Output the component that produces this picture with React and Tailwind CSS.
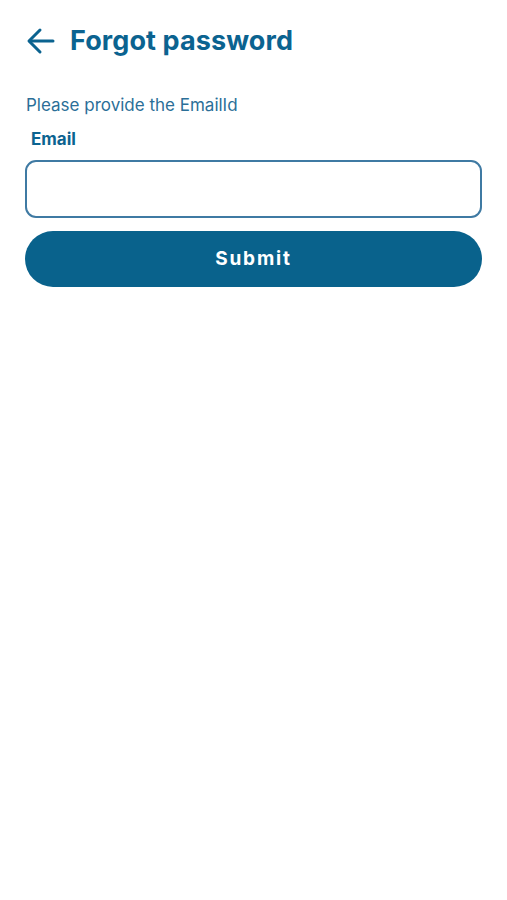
export default function App() {
  return (
    <div className="min-h-[900px] bg-white px-[25px] font-['Inter','Liberation_Sans',sans-serif] text-[#0b6390]">
      <div className="flex items-center gap-[14px] pt-[26px]">
        <svg width="30" height="30" viewBox="0 0 30 30" fill="none" stroke="#0b6390" strokeWidth="3" strokeLinecap="round" strokeLinejoin="round" className="ml-[1px]">
          <path d="M27 15H4" />
          <path d="M14 4L3 15l11 11" />
        </svg>
        <h1 className="text-[27px] font-bold leading-[30px] tracking-[0.1px]">Forgot password</h1>
      </div>
      <p className="mt-[39px] pl-[1px] text-[17px] leading-[20px] text-[#2b6f98]">Please provide the EmailId</p>
      <label className="mt-[14px] block pl-[6px] text-[17px] font-bold leading-[20px]">Email</label>
      <input type="text" className="mt-[11px] block h-[58px] w-full rounded-[11px] border-2 border-[#3f7aa3] bg-white px-3 outline-none" />
      <button className="mt-[13px] flex h-[56px] w-full items-center justify-center rounded-full bg-[#09628c] text-[19px] font-bold tracking-[1.8px] text-white">
        Submit
      </button>
    </div>
  );
}
